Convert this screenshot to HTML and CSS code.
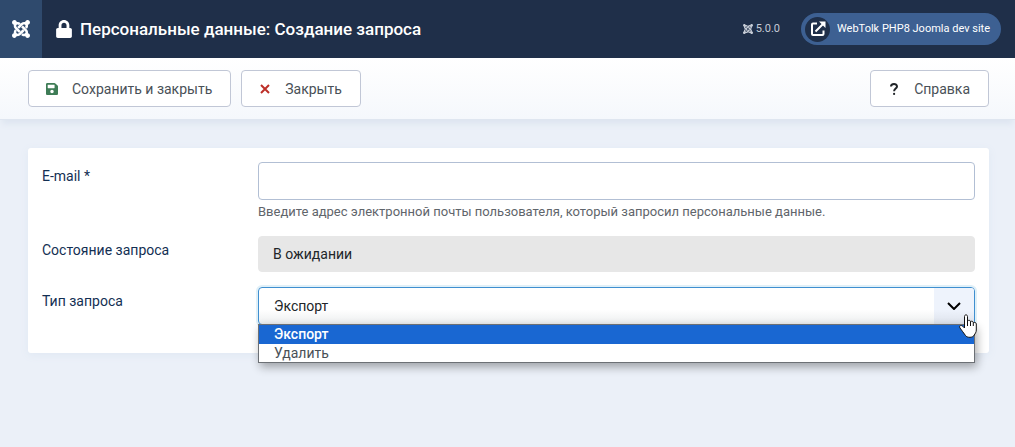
FILE: index.html
```html
<!DOCTYPE html>
<html lang="ru">
<head>
<meta charset="utf-8">
<meta name="viewport" content="width=device-width, initial-scale=1">
<title>Персональные данные: Создание запроса</title>
<link rel="stylesheet" href="styles.css">
</head>
<body>
<svg class="sprite" aria-hidden="true">
  <symbol id="joomla" viewBox="0 32 448 448"><path d="M.6 92.1C.6 58.8 27.4 32 60.4 32c30 0 54.5 21.9 59.2 50.2 32.6-7.6 67.1.6 96.5 30l-44.3 44.3c-20.5-20.5-42.6-16.3-55.4-3.5-14.3 14.3-14.3 37.9 0 52.2l99.5 99.5-44 44.3c-87.7-87.2-49.7-49.7-99.8-99.7-26.8-26.5-35-64.8-24.8-98.9C20.4 144.6.6 120.7.6 92.1zm129.5 116.4l44.3 44.3c10-10 89.7-89.7 99.7-99.8 14.3-14.3 37.6-14.3 51.9 0 12.8 12.8 17 35-3.5 55.4l44 44.3c31.2-31.2 38.5-67.6 28.9-101.2 29.2-4.1 51.9-29.2 51.9-59.5 0-33.2-26.8-60.1-59.8-60.1-30.3 0-55.4 22.5-59.5 51.6-33.8-9.9-71.7-1.5-98.3 25.1-18.3 19.1-71.1 71.5-99.6 99.9zm266.3 152.2c8.2-32.7-.9-68.5-26.3-93.9-11.8-12.2 5 4.7-99.5-99.7l-44.3 44.3 99.7 99.7c14.3 14.3 14.3 37.6 0 51.9-12.8 12.8-35 17-55.4-3.5l-44 44.3c27.6 30.2 68 38.8 102.7 28 5.5 27.4 29.7 48.1 58.9 48.1 33 0 59.8-26.8 59.8-60.1 0-30.2-22.5-55-51.6-59.1zm-84.3-53.1l-44-44.3c-87 86.4-50.4 50.4-99.7 99.8-14.3 14.3-37.6 14.3-51.9 0-13.1-13.4-16.9-35.3 3.2-55.4l-44-44.3c-30.2 30.2-38 65.2-29.5 98.3-26.7 6-46.2 29.9-46.2 58.2C0 453.2 26.8 480 59.8 480c28.6 0 52.5-19.8 58.6-46.7 32.7 8.2 68.5-.6 94.2-26 32.1-32 12.2-12.4 99.5-99.7z"/></symbol>
</svg>
<header class="header">
  <a class="brand" href="#" aria-label="Joomla"><svg class="brand-icon"><use href="#joomla"/></svg></a>
  <h1 class="title">
    <svg class="title-icon" viewBox="0 0 448 512" aria-hidden="true"><path d="M400 224h-24v-72C376 68.2 307.8 0 224 0S72 68.2 72 152v72H48c-26.5 0-48 21.5-48 48v192c0 26.500 21.500 48 48 48h352c26.500 0 48-21.500 48-48V272c0-26.500-21.500-48-48-48zm-104 0H152v-72c0-39.700 32.300-72 72-72s72 32.300 72 72v72z"/></svg>
    Персональные данные: Создание запроса
  </h1>
  <div class="version"><svg class="version-icon" aria-hidden="true"><use href="#joomla"/></svg>5.0.0</div>
  <a class="site-link" href="#">
    <span class="site-badge"><svg class="site-icon" viewBox="0 0 16 16" aria-hidden="true"><path class="site-frame" d="M7 2.500H3a1 1 0 0 0-1 1V13a1 1 0 0 0 1 1h9.500a1 1 0 0 0 1-1V9.500M5.500 10.500 13 3"/><path class="site-tip" d="M9 .500h6.500V7z"/></svg></span>
    WebTolk PHP8 Joomla dev site
  </a>
</header>
<div class="toolbar">
  <button class="btn" type="button"><svg class="btn-icon save" viewBox="0 32 448 448" aria-hidden="true"><path d="M433.941 129.941l-83.882-83.882A48 48 0 0 0 316.118 32H48C21.490 32 0 53.490 0 80v352c0 26.510 21.490 48 48 48h352c26.510 0 48-21.490 48-48V163.882a48 48 0 0 0-14.059-33.941zM224 416c-35.346 0-64-28.654-64-64 0-35.346 28.654-64 64-64s64 28.654 64 64c0 35.346-28.654 64-64 64zm96-304.520V212c0 6.627-5.373 12-12 12H76c-6.627 0-12-5.373-12-12V108c0-6.627 5.373-12 12-12h228.520c3.183 0 6.235 1.264 8.485 3.515l3.480 3.480A11.996 11.996 0 0 1 320 111.480z"/></svg>Сохранить и закрыть</button>
  <button class="btn" type="button"><svg class="btn-icon close" viewBox="0 0 12 12" aria-hidden="true"><path d="m2 2 8 8M10 2l-8 8"/></svg>Закрыть</button>
  <button class="btn help" type="button"><svg class="btn-icon question" viewBox="0 0 12 12" aria-hidden="true"><path d="M3 3.500C3 .300 9 .200 9 3.400 9 5.500 6.100 5.600 6.100 8.200"/><circle cx="6.100" cy="10.900" r="1.100"/></svg>Справка</button>
</div>
<main class="content">
  <form class="card">
    <div class="row">
      <label class="label" for="email">E-mail *</label>
      <div class="field">
        <input class="control" id="email" type="email" aria-describedby="email-hint">
        <div class="hint" id="email-hint">Введите адрес электронной почты пользователя, который запросил персональные данные.</div>
      </div>
    </div>
    <div class="row">
      <label class="label" for="status">Состояние запроса</label>
      <div class="field"><input class="control readonly" id="status" type="text" value="В ожидании" readonly></div>
    </div>
    <div class="row">
      <label class="label" for="type">Тип запроса</label>
      <div class="field select-field">
        <select class="control select" id="type"><option selected>Экспорт</option><option>Удалить</option></select>
        <span class="arrow"><svg class="arrow-icon" viewBox="0 0 14 8" aria-hidden="true"><path d="m1 1 6 6 6-6"/></svg></span>
        <ul class="menu" role="listbox" aria-label="Тип запроса">
          <li class="option active" role="option" aria-selected="true">Экспорт</li>
          <li class="option" role="option" aria-selected="false">Удалить</li>
        </ul>
        <svg class="cursor" viewBox="0 0 18 24" aria-hidden="true"><path d="M5.500 14V2.500C5.500.300 8.500.300 8.500 2.500V7C9.500 5.800 11.500 6.300 11.500 7.700 12.500 6.800 14.300 7.300 14.300 8.700 15.500 8 17.300 8.500 17.300 10V16C17.300 18.500 16 19.500 15.300 21 14 24 8 24 6.500 21.500 5 19 2.500 16.500 1 14 -.500 11.500 2.300 10.800 3.800 12.300z"/><path d="M8.500 7v5M11.500 7.700V12M14.300 8.700V12"/></svg>
      </div>
    </div>
  </form>
</main>
</body>
</html>
```
FILE: styles.css
```css
* {
  box-sizing: border-box;
}

body {
  margin: 0;
  min-height: 100vh;
  background: #ebf0f8;
  color: #132f53;
  font: 14px/20px Roboto, sans-serif;
}

.sprite {
  position: absolute;
  width: 0;
  height: 0;
}

.header {
  display: flex;
  align-items: center;
  height: 58px;
  padding-right: 14px;
  background: #1f2f49;
  color: #fff;
}

.brand {
  display: flex;
  align-items: center;
  justify-content: center;
  align-self: stretch;
  width: 42px;
  background: #2f4a6d;
}

.brand-icon {
  width: 18px;
  height: 18px;
  fill: #fff;
}

.title {
  display: flex;
  flex: 1;
  align-items: center;
  gap: 8px;
  margin: 0;
  padding-left: 14px;
  font-size: 17px;
  font-weight: 500;
  line-height: 24px;
}

.title-icon {
  width: 16px;
  height: 18px;
  fill: #fff;
}

.version {
  display: flex;
  align-items: center;
  gap: 3px;
  margin-right: 21px;
  color: #c6ccd6;
  font-size: 11px;
}

.version-icon {
  width: 10px;
  height: 10px;
  fill: #c6ccd6;
}

.site-link {
  display: flex;
  align-items: center;
  gap: 7px;
  height: 32px;
  padding: 0 11px 0 4px;
  border-radius: 16px;
  background: #3d6092;
  color: #fff;
  font-size: 11px;
  text-decoration: none;
}

.site-badge {
  display: flex;
  align-items: center;
  justify-content: center;
  width: 25px;
  height: 25px;
  border-radius: 50%;
  background: #1f2f49;
}

.site-icon {
  width: 16px;
  height: 16px;
}

.site-frame {
  fill: none;
  stroke: #fff;
  stroke-width: 2;
}

.site-tip {
  fill: #fff;
}

.toolbar {
  display: flex;
  gap: 10px;
  padding: 12px 26px 12px 28px;
  border-bottom: 1px solid #dfe6f0;
  background: linear-gradient(#fff, #f5f8fc);
  box-shadow: 0 6px 6px -2px #dde5f0;
}

.btn {
  display: flex;
  align-items: center;
  gap: 14px;
  height: 37px;
  padding: 0 18px 0 17px;
  border: 1px solid #c1c7d6;
  border-radius: 4px;
  background: #fff;
  color: #495057;
  font: 14px/20px Roboto, sans-serif;
}

.help {
  margin-left: auto;
}

.btn-icon {
  width: 12px;
  height: 12px;
}

.save {
  fill: #3e7c56;
}

.close {
  fill: none;
  stroke: #bd2f28;
  stroke-width: 2;
}

.question {
  fill: none;
  stroke: #212529;
  stroke-width: 2;
}

.question circle {
  fill: #212529;
  stroke: none;
}

.content {
  padding: 28px 26px 28px 28px;
}

.card {
  display: flex;
  flex-direction: column;
  gap: 15px;
  padding: 14px 14px 28px;
  border-radius: 3px;
  background: #fff;
  box-shadow: 0 2px 8px #e0e8f3;
}

.row {
  display: grid;
  grid-template-columns: 216px 1fr;
}

.label {
  padding-top: 4px;
}

.control {
  display: block;
  width: 100%;
  height: 38px;
  padding: 0 14px;
  border: 1px solid #b2bfd4;
  border-radius: 4px;
  outline: none;
  background: #fff;
  color: #212529;
  font: 14px/20px Roboto, sans-serif;
}

.readonly {
  height: 36px;
  border-color: #e7e7e7;
  background: #e7e7e7;
}

.hint {
  padding-top: 3px;
  color: #5f656b;
  font-size: 13px;
  line-height: 18px;
}

.select-field {
  position: relative;
}

.select {
  appearance: none;
  padding: 0 15px;
  border-color: #3f8fd0;
  background: linear-gradient(#fff 60%, #eceeef);
  box-shadow: 0 0 0 2px #e0f0f8;
}

.arrow {
  position: absolute;
  top: 1px;
  right: 1px;
  display: flex;
  align-items: center;
  justify-content: center;
  width: 40px;
  height: 36px;
  border-radius: 0 3px 3px 0;
  background: linear-gradient(#eef3fc 60%, #dde2eb);
  pointer-events: none;
}

.arrow-icon {
  width: 14px;
  height: 8px;
  fill: none;
  stroke: #000;
  stroke-width: 2;
}

.menu {
  position: absolute;
  top: 37px;
  right: 0;
  left: 0;
  margin: 0;
  padding: 0;
  border: 1px solid #6c7075;
  background: #fff;
  box-shadow: 2px 4px 9px #0005;
  list-style: none;
}

.option {
  padding: 0 15px;
  color: #495057;
  line-height: 18px;
}

.active {
  padding-bottom: 1px;
  background: #1967d2;
  color: #fff;
  font-weight: 500;
}

.cursor {
  position: absolute;
  top: 27px;
  right: -2px;
  width: 18px;
  height: 24px;
  fill: #fff;
  stroke: #111;
}
```
